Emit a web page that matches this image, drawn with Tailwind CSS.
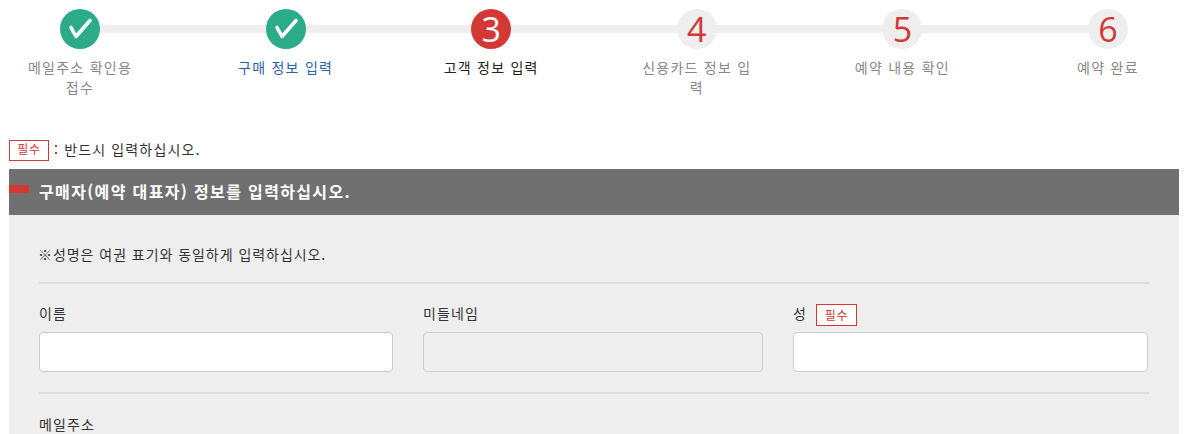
<!DOCTYPE html>
<html lang="ko">
<head>
<meta charset="utf-8">
<script src="https://cdn.jsdelivr.net/npm/@tailwindcss/browser@4"></script>
</head>
<body class="bg-white h-[434px] overflow-hidden font-['Noto_Sans_CJK_KR','Noto_Sans',sans-serif] text-[14px] text-[#333]">
<div class="relative h-[118px] pl-[20px] pr-[18px] pt-[9px]">
  <div class="absolute left-[80px] w-[1028px] top-[25px] h-[8px] bg-[#eeeeee]"></div>
  <ol class="relative flex justify-between">
    <li class="w-[120px] flex flex-col items-center text-center text-[#888] text-[14px] leading-[20px] tracking-[1.25px]">
      <span class="w-[40px] h-[40px] rounded-full bg-[#2bab87] flex items-center justify-center mb-[8px]"><svg class="w-[40px] h-[40px]" viewBox="0 0 40 40" fill="none"><path d="M11 18.5 L16 27.5 L30 11.5" stroke="#fff" stroke-width="3.6" stroke-linecap="round" stroke-linejoin="round"/></svg></span>
      <span>메일주소 확인용 접수</span>
    </li>
    <li class="w-[120px] flex flex-col items-center text-center text-[#2a62a8] text-[14px] leading-[20px] tracking-[1.25px]">
      <span class="w-[40px] h-[40px] rounded-full bg-[#2bab87] flex items-center justify-center mb-[8px]"><svg class="w-[40px] h-[40px]" viewBox="0 0 40 40" fill="none"><path d="M11 18.5 L16 27.5 L30 11.5" stroke="#fff" stroke-width="3.6" stroke-linecap="round" stroke-linejoin="round"/></svg></span>
      <span>구매 정보 입력</span>
    </li>
    <li class="w-[120px] flex flex-col items-center text-center text-[#222] text-[14px] leading-[20px] tracking-[1.25px]">
      <span class="w-[40px] h-[40px] rounded-full bg-[#d33834] flex items-center justify-center mb-[8px] text-white text-[34px] tracking-normal font-['Open_Sans']">3</span>
      <span>고객 정보 입력</span>
    </li>
    <li class="w-[120px] flex flex-col items-center text-center text-[#888] text-[14px] leading-[20px] tracking-[1.25px]">
      <span class="w-[40px] h-[40px] rounded-full bg-[#eeeeee] flex items-center justify-center mb-[8px] text-[#d33834] text-[34px] tracking-normal font-['Open_Sans']">4</span>
      <span>신용카드 정보 입력</span>
    </li>
    <li class="w-[120px] flex flex-col items-center text-center text-[#888] text-[14px] leading-[20px] tracking-[1.25px]">
      <span class="w-[40px] h-[40px] rounded-full bg-[#eeeeee] flex items-center justify-center mb-[8px] text-[#d33834] text-[34px] tracking-normal font-['Open_Sans']">5</span>
      <span>예약 내용 확인</span>
    </li>
    <li class="w-[120px] flex flex-col items-center text-center text-[#888] text-[14px] leading-[20px] tracking-[1.25px]">
      <span class="w-[40px] h-[40px] rounded-full bg-[#eeeeee] flex items-center justify-center mb-[8px] text-[#d33834] text-[34px] tracking-normal font-['Open_Sans']">6</span>
      <span>예약 완료</span>
    </li>
  </ol>
</div>
<main class="mx-[9px] w-[1170px]">
  <p class="flex items-center h-[21px] mt-[22px] mb-[8px] text-[#333] tracking-[1.15px] leading-[19px]">
    <span class="w-[40px] h-[21px] border border-[#d33834] text-[#d33834] text-[12px] leading-[15px] tracking-[0.8px] flex items-start justify-center mr-[5px]">필수</span>
    <span class="-translate-y-[1px]">: 반드시 입력하십시오.</span>
  </p>
  <h2 class="relative h-[46px] bg-[#707070] text-white font-bold text-[16px] leading-[44px] pl-[30px] tracking-[1.35px]">
    <span class="absolute left-0 top-[16px] w-[20px] h-[8px] bg-[#d33834]"></span>
    구매자(예약 대표자) 정보를 입력하십시오.
  </h2>
  <section class="bg-[#eeeeee] px-[30px] h-[300px]">
    <p class="pt-[30px] pb-[17px] leading-[19px] tracking-[0.95px] text-[14px]"><span class="-ml-[1px]">※성명은 여권 표기와 동일하게 입력하십시오.</span></p>
    <hr class="border-0 h-[2px] bg-[#dddddd] mt-[1px]">
    <div class="flex gap-[30px] pt-[18px]">
      <div class="w-[354px]">
        <label class="flex items-center h-[22px] mb-[8px] tracking-[1.1px]">이름</label>
        <input class="block w-full h-[40px] bg-white border border-[#cccccc] rounded-[4px]" type="text">
      </div>
      <div class="w-[340px]">
        <label class="flex items-center h-[22px] mb-[8px] tracking-[1.1px]">미들네임</label>
        <input disabled class="block w-full h-[40px] bg-[#eeeeee] border border-[#cccccc] rounded-[4px]" type="text">
      </div>
      <div class="w-[355px]">
        <label class="flex items-center h-[22px] mb-[8px] tracking-[1.1px]">성<span class="w-[41px] h-[22px] ml-[9px] translate-y-[2px] border border-[#d33834] bg-white text-[#d33834] text-[12px] tracking-[0.8px] font-normal flex items-center justify-center">필수</span></label>
        <input class="block w-full h-[40px] bg-white border border-[#cccccc] rounded-[4px]" type="text">
      </div>
    </div>
    <hr class="border-0 h-[2px] bg-[#dddddd] mt-[20px]">
    <p class="mt-[19px] leading-[22px] tracking-[1.1px]">메일주소</p>
  </section>
</main>
</body>
</html>
